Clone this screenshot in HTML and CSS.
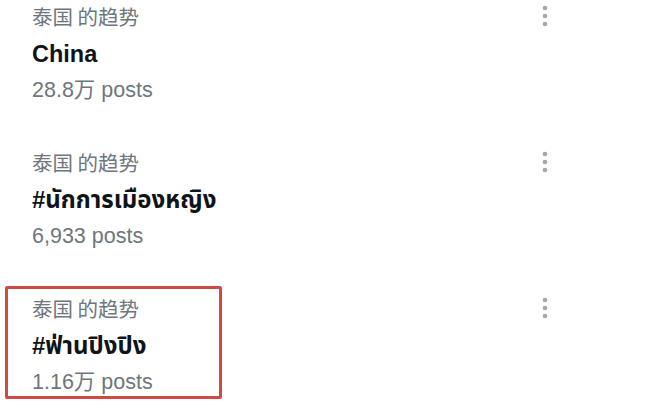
FILE: index.html
```html
<!DOCTYPE html>
<html lang="zh">
<head>
<meta charset="utf-8">
<link rel="stylesheet" href="styles.css">
</head>
<body>
<ul class="trends">
  <li class="trend">
    <div class="info">
      <div class="category">泰国 的趋势</div>
      <div class="title">China</div>
      <div class="count">28.8万 posts</div>
    </div>
    <div class="more"><svg width="6" height="22" viewBox="0 0 6 22"><circle cx="3" cy="3" r="2.3"/><circle cx="3" cy="11" r="2.3"/><circle cx="3" cy="19" r="2.3"/></svg></div>
  </li>
  <li class="trend">
    <div class="info">
      <div class="category">泰国 的趋势</div>
      <div class="title title-thai">#นักการเมืองหญิง</div>
      <div class="count">6,933 posts</div>
    </div>
    <div class="more"><svg width="6" height="22" viewBox="0 0 6 22"><circle cx="3" cy="3" r="2.3"/><circle cx="3" cy="11" r="2.3"/><circle cx="3" cy="19" r="2.3"/></svg></div>
  </li>
  <li class="trend highlighted">
    <div class="info">
      <div class="category">泰国 的趋势</div>
      <div class="title title-thai">#ฟ่านปิงปิง</div>
      <div class="count">1.16万 posts</div>
    </div>
    <div class="more"><svg width="6" height="22" viewBox="0 0 6 22"><circle cx="3" cy="3" r="2.3"/><circle cx="3" cy="11" r="2.3"/><circle cx="3" cy="19" r="2.3"/></svg></div>
    <div class="mark"></div>
  </li>
</ul>
</body>
</html>
```

FILE: styles.css
```css
html, body {
  margin: 0;
  padding: 0;
  background: #ffffff;
  height: 406px;
  overflow: hidden;
}

body {
  font-family: "Liberation Sans", "Noto Sans Thai", "Noto Sans CJK SC", sans-serif;
  color: #0f1419;
}

.trends {
  list-style: none;
  margin: 0;
  padding: 0;
}

.trend {
  position: relative;
  display: grid;
  grid-template-columns: 1fr 30px;
  padding: 0 100px 42px 32px;
}

.trend:last-child {
  padding-bottom: 0;
}

.category {
  font-size: 20.5px;
  line-height: 32px;
  color: #6e767d;
  font-family: "Noto Sans CJK SC", "Liberation Sans", sans-serif;
}

.title {
  font-size: 23.5px;
  line-height: 44px;
  font-weight: 700;
  color: #0f1419;
}

.title-thai {
  font-size: 24px;
}

.count {
  font-size: 21.5px;
  line-height: 28px;
  color: #6e767d;
}

.more {
  display: flex;
  justify-content: center;
  padding-top: 5px;
}

.more svg {
  fill: #a3a8ad;
}

.mark {
  position: absolute;
  left: 5px;
  top: -6px;
  width: 211px;
  height: 107px;
  border: 3px solid #cf4a44;
  border-radius: 2px;
}
```
